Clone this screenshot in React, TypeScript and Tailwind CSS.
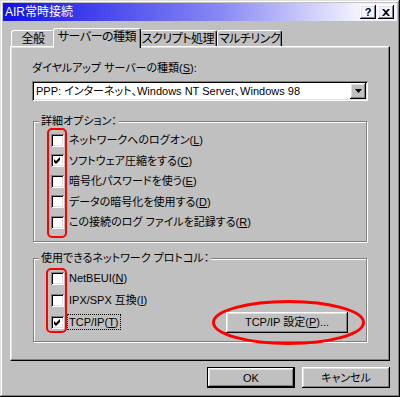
const raised =
  "shadow-[inset_-1px_-1px_#000,inset_1px_1px_#fff,inset_-2px_-2px_#808080,inset_2px_2px_#dfdfdf]";
const sunken =
  "shadow-[inset_1px_1px_#808080,inset_-1px_-1px_#fff,inset_2px_2px_#000,inset_-2px_-2px_#dfdfdf]";

function Key({ k }: { k: string }) {
  return (
    <>
      (<u className="underline-offset-[1px]">{k}</u>)
    </>
  );
}

function CheckBox({ checked }: { checked?: boolean }) {
  return (
    <div className={`relative h-[13px] w-[13px] shrink-0 bg-white ${sunken}`}>
      {checked && (
        <svg className="absolute left-0 top-0" width="13" height="13" viewBox="0 0 13 13">
          <path d="M3 5 L5 7 L9 3 L9 6 L5 10 L3 8 Z" fill="#000" />
        </svg>
      )}
    </div>
  );
}

function Row({ checked, children, h }: { checked?: boolean; children: React.ReactNode; h: string }) {
  return (
    <div className={`flex items-center pl-[17px] ${h}`}>
      <CheckBox checked={checked} />
      <span className="ml-[5px] whitespace-nowrap leading-[14px]">{children}</span>
    </div>
  );
}

function Group({ title, children, h }: { title: string; children: React.ReactNode; h: string }) {
  return (
    <div className={`relative ml-[1px] w-[334px] ${h} border border-[#808080] shadow-[inset_1px_1px_#fff,1px_1px_#fff] pt-[8px]`}>
      <span className="absolute -top-[8px] left-[5px] bg-[#c0c0c0] px-[2px] leading-[14px]">{title}</span>
      {children}
    </div>
  );
}

function Tab({ label, active, w }: { label: string; active?: boolean; w: string }) {
  return (
    <div
      className={`flex items-start justify-center rounded-t-[3px] border-l border-t border-r border-l-white border-t-white border-r-black bg-[#c0c0c0] pt-[1px] shadow-[inset_-1px_0_#808080] ${w} ${
        active ? "relative z-10 -mx-[2px] -mb-[2px] h-[20px]" : "h-[16px]"
      }`}
    >
      <span className="whitespace-nowrap text-[12px] leading-[14px] tracking-[-0.5px]">{label}</span>
    </div>
  );
}

function Button({ children, w, def }: { children: React.ReactNode; w: string; def?: boolean }) {
  return (
    <div className={`flex h-[21px] items-center justify-center ${w} ${def ? "border border-black" : ""}`}>
      <div className={`flex h-full w-full items-center justify-center ${raised}`}>
        <span className="whitespace-nowrap leading-[14px]">{children}</span>
      </div>
    </div>
  );
}

export default function App() {
  return (
    <div className="relative h-[397px] w-[400px] bg-[#c0c0c0] p-[3px] font-['Liberation_Sans','Noto_Sans_CJK_JP',sans-serif] text-[11px] text-black [font-feature-settings:'palt'] shadow-[inset_-1px_-1px_#000,inset_1px_1px_#dfdfdf,inset_-2px_-2px_#808080,inset_2px_2px_#fff]">
      {/* title bar */}
      <div className="flex h-[18px] items-center justify-between bg-[linear-gradient(90deg,#1010e8,#8888f4_55%,#f2f2ff_90%)] pl-[2px] pr-[3px]">
        <span className="text-[12px] leading-[14px] text-white">AIR常時接続</span>
        <div className="flex gap-[2px]">
          <div className={`flex h-[14px] w-[16px] items-center justify-center ${raised}`}>
            <span className="text-[11px] font-bold leading-none">?</span>
          </div>
          <div className={`flex h-[14px] w-[16px] items-center justify-center ${raised}`}>
            <svg width="8" height="7" viewBox="0 0 8 7">
              <path d="M0 0 L2 0 L4 2 L6 0 L8 0 L5 3.5 L8 7 L6 7 L4 5 L2 7 L0 7 L3 3.5 Z" fill="#000" />
            </svg>
          </div>
        </div>
      </div>

      <div className="px-[7px] pt-[7px]">
        {/* tabs */}
        <div className="flex h-[18px] items-end pl-[1px]">
          <Tab label="全般" w="w-[44px]" />
          <Tab label="サーバーの種類" active w="w-[88px]" />
          <Tab label="スクリプト処理" w="w-[78px]" />
          <Tab label="マルチリンク" w="w-[65px]" />
        </div>

        {/* panel */}
        <div className="h-[315px] w-[380px] border border-b-black border-l-white border-r-black border-t-white px-[21px] pt-[14px] shadow-[inset_-1px_-1px_#808080,inset_1px_1px_#dfdfdf]">
          <div className="leading-[14px]">
            ダイヤルアップ サーバーの種類<Key k="S" />:
          </div>

          <div className={`mt-[6px] flex h-[20px] w-[336px] items-center justify-between bg-white pl-[4px] pr-[2px] ${sunken}`}>
            <span className="whitespace-nowrap leading-[14px]">PPP: インターネット、Windows NT Server、Windows 98</span>
            <div className={`flex h-[16px] w-[16px] items-center justify-center bg-[#c0c0c0] ${raised}`}>
              <svg width="7" height="4" viewBox="0 0 7 4">
                <path d="M0 0 L7 0 L3.5 4 Z" fill="#000" />
              </svg>
            </div>
          </div>

          <div className="mt-[20px]">
            <Group title="詳細オプション：" h="h-[121px]">
              <Row h="h-[20.5px]">
                ネットワークへのログオン<Key k="L" />
              </Row>
              <Row h="h-[20.5px]" checked>
                ソフトウェア圧縮をする<Key k="C" />
              </Row>
              <Row h="h-[20.5px]">
                暗号化パスワードを使う<Key k="E" />
              </Row>
              <Row h="h-[20.5px]">
                データの暗号化を使用する<Key k="D" />
              </Row>
              <Row h="h-[20.5px]">
                この接続のログ ファイルを記録する<Key k="R" />
              </Row>
            </Group>
          </div>

          <div className="mt-[16px]">
            <Group title="使用できるネットワーク プロトコル：" h="h-[84px]">
              <Row h="h-[22px]">
                NetBEUI<Key k="N" />
              </Row>
              <Row h="h-[22px]">
                IPX/SPX 互換<Key k="I" />
              </Row>
              <div className="flex h-[22px] items-center justify-between pl-[17px] pr-[18px]">
                <div className="flex items-center">
                  <CheckBox checked />
                  <span className="ml-[4px] px-[1px] leading-[14px] outline-1 outline-dotted outline-black">
                    TCP/IP<Key k="T" />
                  </span>
                </div>
                <Button w="w-[122px]">
                  TCP/IP 設定<Key k="P" />...
                </Button>
              </div>
            </Group>
          </div>
        </div>

        {/* dialog buttons */}
        <div className="mt-[6px] flex justify-end gap-[7px]">
          <Button w="w-[88px]" def>
            OK
          </Button>
          <Button w="w-[88px]">キャンセル</Button>
        </div>
      </div>

      {/* red annotations */}
      <svg className="pointer-events-none absolute left-0 top-0" width="400" height="397" viewBox="0 0 400 397">
        <rect x="48" y="129" width="18" height="108" rx="4" fill="none" stroke="#ff0000" strokeWidth="2" />
        <rect x="47" y="269" width="19" height="63" rx="4" fill="none" stroke="#ff0000" strokeWidth="2" />
        <ellipse cx="288.5" cy="322.5" rx="75" ry="21" fill="none" stroke="#ff0000" strokeWidth="3" />
      </svg>
    </div>
  );
}
